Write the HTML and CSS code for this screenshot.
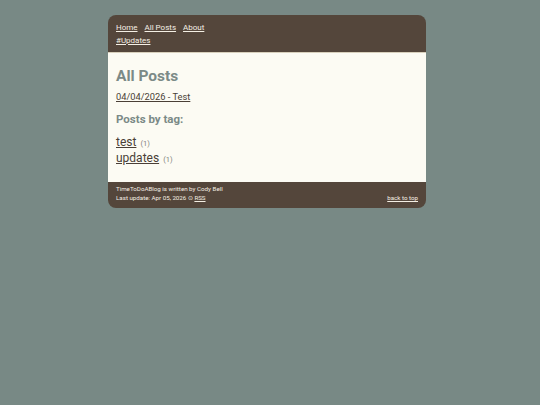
FILE: index.html
```html
<!DOCTYPE html>
<html lang="en">
<head>
<meta charset="utf-8">
<title>All Posts - TimeToDoABlog</title>
<link rel="stylesheet" href="styles.css">
</head>
<body>
<div class="page">
  <header class="site-header">
    <nav class="nav">
      <a href="#">Home</a>
      <a href="#">All Posts</a>
      <a href="#">About</a>
    </nav>
    <div class="nav nav-tags"><a href="#">#Updates</a></div>
  </header>
  <main class="content">
    <h1 class="title">All Posts</h1>
    <ul class="post-list">
      <li><a href="#">04/04/2026 - Test</a></li>
    </ul>
    <h2 class="subtitle">Posts by tag:</h2>
    <ul class="tag-list">
      <li><a href="#">test</a> <span class="count">(1)</span></li>
      <li><a href="#">updates</a> <span class="count">(1)</span></li>
    </ul>
  </main>
  <footer class="site-footer">
    <div class="footer-info">
      <div>TimeToDoABlog is written by Cody Bell</div>
      <div>Last update: Apr 05, 2026 <span class="dot">⊙</span> <a href="#">RSS</a></div>
    </div>
    <a class="top-link" href="#">back to top</a>
  </footer>
</div>
</body>
</html>
```
FILE: styles.css
```css
html, body {
  margin: 0;
  padding: 0;
  background: #788985;
  font-family: Roboto, "Liberation Sans", sans-serif;
}
.page {
  width: 318px;
  margin: 15px 0 0 108px;
  border-radius: 8px;
  overflow: hidden;
}
.site-header {
  background: #54463b;
  padding: 6px 8px 5px;
  border-bottom: 1px solid #d8d0bc;
}
.nav {
  font-size: 8px;
  line-height: 13px;
}
.nav a {
  color: #f4efe4;
  margin-right: 5px;
}
.content {
  background: #fcfbf3;
  padding: 13px 8px 16px;
  color: #4a3f36;
}
.title {
  margin: 0 0 4px;
  font-size: 15.5px;
  line-height: 20px;
  color: #7b8a87;
  font-weight: 700;
}
.post-list, .tag-list {
  list-style: none;
  margin: 0;
  padding: 0;
}
.post-list {
  font-size: 9.3px;
  line-height: 14px;
  margin-bottom: 7px;
}
.post-list a, .tag-list a {
  color: #4a3f36;
}
.subtitle {
  margin: 0 0 7px;
  font-size: 11.5px;
  line-height: 16px;
  color: #7b8a87;
  font-weight: 700;
}
.tag-list li {
  font-size: 12px;
  line-height: 16px;
  height: 16px;
}
.count {
  font-size: 7.5px;
  line-height: 1;
  color: #7f7f7b;
  margin-left: 1px;
}
.site-footer {
  background: #54463b;
  color: #f4efe4;
  font-size: 6.2px;
  line-height: 9px;
  padding: 3px 8px 5px;
  display: flex;
  justify-content: space-between;
  align-items: flex-end;
}
.site-footer a {
  color: #f4efe4;
}
.dot {
  font-size: 6px;
  line-height: 1;
}
```
